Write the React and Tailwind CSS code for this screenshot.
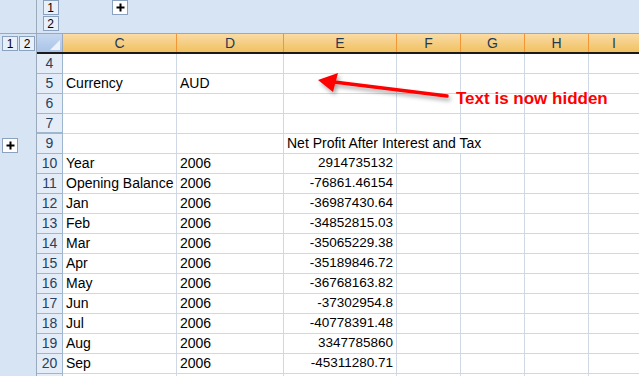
import React from "react";

const rows = [
  { n: 4 },
  { n: 5, c: "Currency", d: "AUD" },
  { n: 6 },
  { n: 7, hidden: true },
  { n: 9, title: "Net Profit After Interest and Tax" },
  { n: 10, c: "Year", d: "2006", e: "2914735132" },
  { n: 11, c: "Opening Balance", d: "2006", e: "-76861.46154" },
  { n: 12, c: "Jan", d: "2006", e: "-36987430.64" },
  { n: 13, c: "Feb", d: "2006", e: "-34852815.03" },
  { n: 14, c: "Mar", d: "2006", e: "-35065229.38" },
  { n: 15, c: "Apr", d: "2006", e: "-35189846.72" },
  { n: 16, c: "May", d: "2006", e: "-36768163.82" },
  { n: 17, c: "Jun", d: "2006", e: "-37302954.8" },
  { n: 18, c: "Jul", d: "2006", e: "-40778391.48" },
  { n: 19, c: "Aug", d: "2006", e: "3347785860" },
  { n: 20, c: "Sep", d: "2006", e: "-45311280.71" },
  { n: "" },
];

const OutlineBtn = ({ children, className = "" }) => (
  <div
    className={`flex items-center justify-center w-[16px] h-[15px] border border-[#8aa2bf] bg-[#e8f0fa] text-[12px] leading-none text-black ${className}`}
  >
    {children}
  </div>
);

const Plus = () => (
  <svg width="9" height="9" viewBox="0 0 9 9">
    <path d="M4.5 0.5v8M0.5 4.5h8" stroke="#000" strokeWidth="2" />
  </svg>
);

const Head = ({ w, label, last }) => (
  <div
    className={`${w} h-full flex items-center justify-center text-[14px] text-[#1f3a55] ${last ? "" : "border-r border-[#f29536]"}`}
  >
    {label}
  </div>
);

const Cell = ({ w, children, right, last }) => (
  <div
    className={`${w} h-full flex items-center whitespace-nowrap overflow-hidden ${right ? "justify-end pr-[3px] text-[13.5px]" : "pl-[3px]"} ${last ? "" : "border-r"} border-b border-[#d0d7e5]`}
  >
    {children}
  </div>
);

export default function App() {
  return (
    <div
      className="relative w-[639px] h-[376px] overflow-hidden bg-white flex flex-col"
      style={{ fontFamily: '"Liberation Sans", Arial, sans-serif' }}
    >
      {/* column outline bar */}
      <div className="h-[34px] shrink-0 flex bg-[#d6e4f3] border-b border-[#9aa9bb]">
        <div className="w-[37px] border-r border-[#9aa9bb]" />
        <div className="w-[26px] flex flex-col gap-[1px] items-center pl-[1px]">
          <OutlineBtn>1</OutlineBtn>
          <OutlineBtn>2</OutlineBtn>
        </div>
        <div className="pl-[49px]">
          <OutlineBtn className="h-[14px] bg-white">
            <Plus />
          </OutlineBtn>
        </div>
      </div>

      <div className="flex flex-1 min-h-0">
        {/* row outline pane */}
        <div className="w-[37px] shrink-0 bg-[#d6e4f3] border-r border-[#9aa9bb] flex flex-col">
          <div className="h-[20px] flex gap-[1px] pl-[2px] pt-[2px]">
            <OutlineBtn>1</OutlineBtn>
            <OutlineBtn>2</OutlineBtn>
          </div>
          <div className="pt-[84px] pl-[2px]">
            <OutlineBtn className="h-[14px] bg-white">
              <Plus />
            </OutlineBtn>
          </div>
        </div>

        {/* sheet */}
        <div className="flex-1 flex flex-col">
          <div className="h-[20px] shrink-0 flex border-b-2 border-[#1a1a1a]">
            <div className="w-[26px] h-full bg-gradient-to-b from-[#c5d8f1] to-[#a9c3e8] border-r border-[#9aa9bb] relative">
              <div className="absolute right-[2px] bottom-[2px] w-0 h-0 border-l-[10px] border-l-transparent border-b-[10px] border-b-[#eef3fa]" />
            </div>
            <div className="flex flex-1 bg-gradient-to-b from-[#f9dba4] to-[#f1c15f]">
              <Head w="w-[114px]" label="C" />
              <Head w="w-[107px]" label="D" />
              <Head w="w-[113px]" label="E" />
              <Head w="w-[64px]" label="F" />
              <Head w="w-[64px]" label="G" />
              <Head w="w-[64px]" label="H" />
              <Head w="flex-1" label="I" last />
            </div>
          </div>

          {rows.map((r, i) => (
            <div key={i} className="h-[20px] shrink-0 flex text-[14px] text-black">
              <div
                className={`w-[26px] h-full flex items-center justify-center bg-[#e4ecf7] text-[#27415f] border-r border-[#9eb6ce] ${r.hidden ? "border-b-2" : "border-b"} border-b-[#9eb6ce]`}
              >
                {r.n}
              </div>
              <Cell w="w-[114px]">{r.c}</Cell>
              <Cell w="w-[107px]">{r.d}</Cell>
              {r.title ? (
                <Cell w="w-[241px]">{r.title}</Cell>
              ) : (
                <>
                  <Cell w="w-[113px]" right>
                    {r.e}
                  </Cell>
                  <Cell w="w-[64px]" />
                  <Cell w="w-[64px]" />
                </>
              )}
              <Cell w="w-[64px]" />
              <Cell w="flex-1" last />
            </div>
          ))}
        </div>
      </div>

      {/* annotation */}
      <svg className="absolute left-0 top-0 pointer-events-none" width="639" height="376">
        <defs>
          <filter id="sh" x="-20%" y="-50%" width="140%" height="200%">
            <feDropShadow dx="2" dy="3" stdDeviation="2" floodColor="#000" floodOpacity="0.35" />
          </filter>
        </defs>
        <g filter="url(#sh)">
          <path d="M447 96 L326 81" stroke="#ff0000" strokeWidth="3.5" strokeLinecap="round" />
          <path d="M318 80 L338 73 L333 92 Z" fill="#ff0000" />
        </g>
      </svg>
      <div className="absolute left-[456px] top-[90px] text-[17px] font-bold text-[#ff0000] leading-none">
        Text is now hidden
      </div>
    </div>
  );
}
